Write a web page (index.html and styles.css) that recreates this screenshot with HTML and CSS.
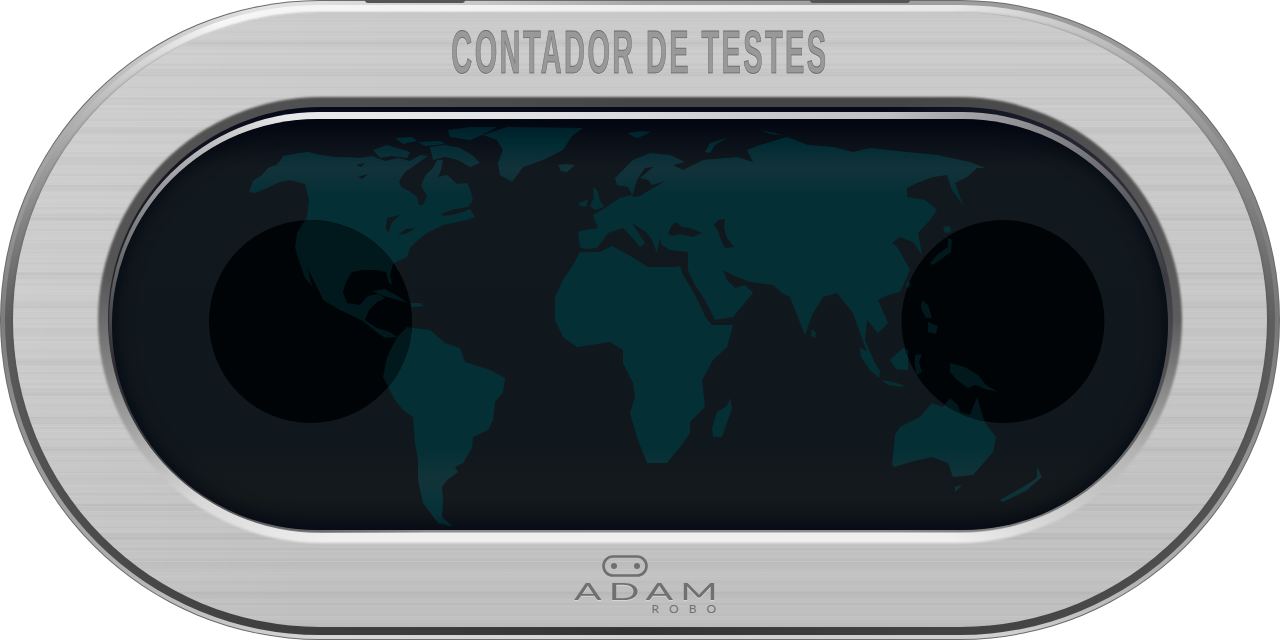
FILE: index.html
```html
<!DOCTYPE html>
<html>
<head>
  <meta charset="utf-8">
  <title>Contador de testes</title>
  <link rel="stylesheet" href="styles.css">
</head>
<body>
  <div class="device">
    <span class="tab tab-left"></span>
    <span class="tab tab-right"></span>
    <div class="rim-outer">
      <div class="rim-inner">
        <div class="plate">
          <div class="title-bar">
            <h1 class="title">CONTADOR DE TESTES</h1>
          </div>

          <div class="well">
            <div class="lip">
              <div class="gloss">
                <div class="screen">
                  <svg class="map" viewBox="112 119 1056 410" width="1056" height="410">
                    <defs>
                      <linearGradient id="landFill" gradientUnits="userSpaceOnUse" x1="0" y1="119" x2="0" y2="529">
                        <stop offset="0" stop-color="#00242c"/>
                        <stop offset="0.06" stop-color="#012b33"/>
                        <stop offset="0.12" stop-color="#13323a"/>
                        <stop offset="0.19" stop-color="#032f35"/>
                        <stop offset="0.8" stop-color="#032f35"/>
                        <stop offset="0.88" stop-color="#123439"/>
                        <stop offset="0.94" stop-color="#07323a"/>
                        <stop offset="1" stop-color="#07323a"/>
                      </linearGradient>
                      <clipPath id="leftClip"><circle cx="310.5" cy="321.5" r="101.5"/></clipPath>
                      <clipPath id="rightClip"><circle cx="1003" cy="321.5" r="101.5"/></clipPath>

                      <g id="world">
                        <!-- north america -->
                        <path class="land" d="M253 181 262 175 268 168 276 165 281 160 283 156 300 153 308 152 320 155 335 157 345 157 360 158 372 156 385 161 398 158 410 161 420 155 428 156 418 163 405 172 399 181 401 187 409 191 417 197 419 205 423 205 427 196 421 186 425 176 433 168 437 160 443 160 441 170 438 177 447 175 457 184 467 183 471 192 473 200 468 207 455 209 443 213 441 216 452 215 463 212 470 209 475 217 470 219 458 222 443 225 427 233 418 240 410 248 407 257 398 261 393 264 390 275 392 284 389 283 386 272 376 270 362 270 352 272 346 282 343 292 347 303 360 305 368 296 378 294 385 298 377 302 369 310 365 320 377 328 390 332 397 337 385 338 375 331 363 321 340 310 323 300 315 283 307 267 312 286 305 278 297 255 295 247 297 233 307 217 309 200 305 184 290 180 280 182 267 188 255 193 249 192Z"/>
                        <path class="sea" d="M387 218 400 215 392 222 388 233 386 228Z"/>
                        <path class="sea" d="M398 235 406 229 415 228 408 233Z"/>
                        <path class="sea" d="M356 165 365 163 361 167Z"/>
                        <path class="sea" d="M358 177 368 174 362 179Z"/>
                        <!-- arctic islands and greenland -->
                        <path class="land" d="M373 150 387 145 400 149 410 152 407 158 392 156 380 158Z"/>
                        <path class="land" d="M395 138 412 137 417 141 403 144Z"/>
                        <path class="land" d="M430 147 445 145 460 148 472 155 480 163 470 167 458 160 445 157 433 160Z"/>
                        <path class="land" d="M448 130 470 127 497 127 482 135 470 140 450 137Z"/>
                        <path class="land" d="M418 142 440 141 445 144 425 146Z"/>
                        <path class="land" d="M483 135 507 127 583 128 572 136 563 150 543 160 523 167 512 182 500 175 498 163 503 150 497 140Z"/>
                        <path class="land" d="M558 165 566 164 575 165 567 172 561 171Z"/>
                        <path class="land" d="M628 133 640 131 651 132 638 138 634 137Z"/>
                        <path class="land" d="M705 152 710 143 727 138 715 145 710 153Z"/>
                        <path class="land" d="M760 130 775 133 782 135 770 134Z"/>
                        <!-- cuba, hispaniola -->
                        <path class="land" d="M372 291 385 289 398 296 408 303 394 299 381 295Z"/>
                        <path class="land" d="M410 303 420 303 424 306 412 307Z"/>
                        <!-- south america -->
                        <path class="land" d="M407 327 413 328 430 330 445 343 460 348 465 362 490 370 505 378 503 392 495 402 493 420 488 430 473 437 472 448 463 463 455 467 458 472 447 480 442 487 443 500 442 517 453 527 438 523 423 503 418 480 418 460 415 443 413 417 403 410 395 400 383 377 387 357 397 337Z"/>
                        <!-- africa -->
                        <path class="land" d="M580 252 600 252 612 246 627 254 648 267 677 267 680 266 683 275 695 295 706 318 712 325 733 325 727 347 713 360 702 380 705 407 690 422 690 433 683 443 667 463 647 463 638 440 630 413 635 397 633 383 623 363 623 350 610 342 577 347 563 337 555 320 555 297 563 280 573 265Z"/>
                        <path class="land" d="M730 398 732 408 722 437 713 437 712 428 717 412 727 406Z"/>
                        <!-- eurasia -->
                        <path class="land" d="M578 233 580 231 598 228 593 215 605 208 620 198 632 195 628 187 617 185 615 178 625 168 633 160 650 153 670 155 685 162 673 165 683 170 703 160 737 157 753 162 747 150 760 145 787 137 808 145 833 147 853 152 870 148 907 152 937 155 970 162 985 168 977 168 967 177 955 183 963 205 952 190 947 175 933 177 917 183 907 188 907 197 925 200 937 210 930 220 918 233 922 255 913 242 900 237 892 243 898 248 910 270 900 292 888 295 878 300 888 323 878 333 867 320 865 340 880 375 873 370 862 338 853 313 837 293 823 297 812 315 805 335 790 297 782 293 773 285 750 282 733 275 723 270 727 280 735 288 745 285 753 293 733 317 715 320 705 300 695 285 688 270 688 252 670 250 662 245 660 238 657 253 652 240 646 232 632 223 645 243 640 247 630 235 623 228 608 233 603 240 597 248 585 249 580 247Z"/>
                        <path class="sea" d="M632 197 640 196 650 190 665 181 652 185 648 180 640 178 653 167 645 168 637 180 634 190Z"/>
                        <path class="sea" d="M668 233 672 225 676 222 682 227 690 228 702 233 692 237 680 234 672 236Z"/>
                        <path class="sea" d="M714 225 718 220 725 219 724 228 727 238 734 247 725 248 721 240 718 231Z"/>
                        <!-- british isles -->
                        <path class="land" d="M593 187 597 190 600 200 604 207 595 210 590 206 594 198Z"/>
                        <path class="land" d="M580 203 588 199 586 207 578 205Z"/>
                        <!-- japan, taiwan, sri lanka -->
                        <path class="land" d="M943 227 950 226 951 232 945 233Z"/>
                        <path class="land" d="M930 263 938 254 948 247 948 238 952 240 951 252 940 260 933 265Z"/>
                        <path class="land" d="M908 281 911 284 908 289 906 286Z"/>
                        <path class="land" d="M812 329 816 333 815 338 811 336Z"/>
                        <!-- indonesia, new guinea -->
                        <path class="land" d="M860 347 868 353 880 371 879 378 870 370 861 357Z"/>
                        <path class="land" d="M890 360 903 348 908 350 908 370 896 369Z"/>
                        <path class="land" d="M882 380 892 382 903 385 903 387 888 385Z"/>
                        <path class="land" d="M915 355 922 354 919 362 922 372 916 375 915 365Z"/>
                        <path class="land" d="M922 300 928 305 932 318 926 318 921 308Z"/>
                        <path class="land" d="M928 322 938 326 936 334 928 332Z"/>
                        <path class="land" d="M950 363 965 367 978 375 986 385 998 392 985 389 975 385 968 388 957 380 950 372Z"/>
                        <!-- australia -->
                        <path class="land" d="M895 435 900 427 920 417 932 403 943 407 950 398 958 405 960 412 970 415 977 397 985 423 996 437 993 452 973 475 953 477 948 463 932 457 910 462 895 467 892 465Z"/>
                        <path class="land" d="M955 487 962 485 955 492Z"/>
                        <path class="land" d="M1000 500 1023 487 1034 480 1037 477 1037 467 1042 477 1027 490 1003 502Z"/>
                      </g>
                    </defs>

                    <g class="lit"><use href="#world"/></g>

                    <!-- the two dark gauge discs, land still shows through them -->
                    <circle class="disc" cx="310.5" cy="321.5" r="101.5"/>
                    <circle class="disc" cx="1003" cy="321.5" r="101.5"/>
                    <g class="shaded" clip-path="url(#leftClip)"><use href="#world"/></g>
                    <g class="shaded" clip-path="url(#rightClip)"><use href="#world"/></g>
                  </svg>
                </div>
              </div>
            </div>
          </div>

          <div class="brand">
            <svg class="brand-head" viewBox="0 0 46 22" width="46" height="22">
              <rect x="1.5" y="1.5" width="43" height="19" rx="9.5" fill="none" stroke="#6f6f6f" stroke-width="2.6"/>
              <circle cx="12" cy="11" r="3" fill="#6f6f6f"/>
              <circle cx="35" cy="11" r="3" fill="#6f6f6f"/>
            </svg>
            <div class="brand-name">ADAM</div>
            <div class="brand-sub">ROBO</div>
          </div>
        </div>
      </div>
    </div>
  </div>
</body>
</html>
```

FILE: styles.css
```css
body {
  margin: 0;
  background: white;
  font-family: "Liberation Sans", Arial, sans-serif;
}

.device {
  position: relative;
  width: 1280px;
  height: 640px;
  box-sizing: border-box;
  padding: 1px;
  border-radius: 320px;
  background: #6b6b6b;
  overflow: hidden;
}

.tab {
  position: absolute;
  top: 0;
  width: 100px;
  height: 3px;
  border-radius: 0 0 4px 4px;
  background: #555;
  z-index: 2;
}

.tab-left {
  left: 365px;
}

.tab-right {
  left: 810px;
}

.rim-outer {
  height: 100%;
  box-sizing: border-box;
  padding: 4px;
  border-radius: 320px;
  background: conic-gradient(#a8a8a8 0deg, #9a9a9a 60deg, #777 90deg, #cfcfcf 130deg, #d8d8d8 225deg, #7d7d7d 270deg, #e4e4e4 310deg, #a8a8a8 360deg);
}

.rim-inner {
  height: 100%;
  box-sizing: border-box;
  padding: 8px;
  border-radius: 320px;
  background: conic-gradient(#efefef 0deg, #e8e8e8 45deg, #5e5e5e 90deg, #444 130deg, #333 180deg, #3f3f3f 230deg, #5c5c5c 270deg, #f6f6f6 305deg, #efefef 360deg);
}

.plate {
  height: 100%;
  box-sizing: border-box;
  display: flex;
  flex-direction: column;
  border-radius: 320px;
  box-shadow: 0 0 3px rgba(70, 70, 70, 0.6);
  background:
    repeating-linear-gradient(0deg, rgba(255, 255, 255, 0.05) 0 1px, transparent 1px 5px),
    repeating-linear-gradient(0deg, rgba(0, 0, 0, 0.02) 0 2px, transparent 2px 11px),
    repeating-linear-gradient(0deg, rgba(0, 0, 0, 0.025) 0 7px, transparent 7px 29px),
    repeating-linear-gradient(0deg, rgba(255, 255, 255, 0.03) 0 13px, transparent 13px 47px),
    linear-gradient(100deg, rgba(255, 255, 255, 0.1), transparent 30%),
    linear-gradient(#cbcbcb, #c7c7c7 50%, #bfbfbf);
}

.title-bar {
  height: 83px;
  flex-shrink: 0;
  display: flex;
  justify-content: center;
  align-items: flex-start;
}

.title {
  margin: 4px 0 0;
  font-family: "Liberation Sans", sans-serif;
  font-size: 61px;
  line-height: 70px;
  font-weight: bold;
  letter-spacing: 5px;
  white-space: nowrap;
  color: #999;
  -webkit-text-stroke: 1px #6c6c6c;
  text-shadow: 0 1px 1px rgba(255, 255, 255, 0.5);
  transform: scaleX(0.475);
}

.well {
  position: relative;
  margin: 0 84px;
  height: 448px;
  flex-shrink: 0;
  box-sizing: border-box;
  padding: 11px 10px 11px 11px;
  border-radius: 224px;
}

/* soft edge where the plate falls away into the window */
.well::before {
  content: "";
  position: absolute;
  inset: 1px;
  border-radius: 224px;
  filter: blur(1.2px);
  background: conic-gradient(#454545 0deg, #454545 50deg, #5c5c5c 90deg, #b4b4b4 105deg, #efefef 125deg, #efefef 235deg, #d8d8d8 248deg, #999 260deg, #555 275deg, #454545 360deg);
}

.lip {
  position: relative;
  height: 100%;
  box-sizing: border-box;
  padding: 5px 1px 1px 1px;
  border-radius: 214px;
  background: conic-gradient(#060a18 0deg, #060a18 50deg, #44444c 90deg, #a8a8a8 110deg, #c4c4c4 130deg, #bdbdbd 225deg, #6a6a6a 245deg, #2a2a30 270deg, #060a18 300deg, #060a18 360deg);
}

.gloss {
  height: 100%;
  box-sizing: border-box;
  padding: 7px 4px 2px 3px;
  border-radius: 210px;
  background: conic-gradient(#d8d8dc 0deg, #c0c0c4 50deg, #3a3a40 85deg, #666 105deg, #8e8e8e 130deg, #8e8e8e 225deg, #55555a 245deg, #2a2a30 265deg, #e8e8ea 300deg, #d8d8dc 360deg);
}

.screen {
  position: relative;
  height: 100%;
  overflow: hidden;
  border-radius: 205px;
  background: linear-gradient(#030812 0, #0a0f18 20px, #12191e 50px, #11181d 80%, #14191c 92%, #0e131a 100%);
}

.screen::after {
  content: "";
  position: absolute;
  inset: 0;
  border-radius: 205px;
  box-shadow: inset 0 0 18px 3px rgba(1, 5, 16, 0.75);
}

.map {
  display: block;
}

.lit {
  --land-color: url(#landFill);
  --sea-color: #11181d;
}

.shaded {
  --land-color: #01191c;
  --sea-color: #000406;
}

.land {
  fill: var(--land-color);
}

.sea {
  fill: var(--sea-color);
}

.disc {
  fill: #000406;
}

.brand {
  align-self: center;
  width: 142px;
  margin-left: 10px;
  display: flex;
  flex-direction: column;
  padding-top: 11px;
  color: #707070;
}

.brand-head {
  display: block;
  margin-left: 28px;
}

.brand-name {
  margin-top: 5px;
  font-family: Lato, sans-serif;
  font-size: 24px;
  line-height: 18px;
  letter-spacing: 4px;
  text-shadow: 0 1px 0 rgba(255, 255, 255, 0.35);
  transform: scaleX(1.7);
  transform-origin: left center;
}

.brand-sub {
  align-self: flex-end;
  margin-top: 3px;
  margin-right: -10px;
  font-family: Lato, sans-serif;
  font-size: 12px;
  line-height: 12px;
  letter-spacing: 10px;
}
```
